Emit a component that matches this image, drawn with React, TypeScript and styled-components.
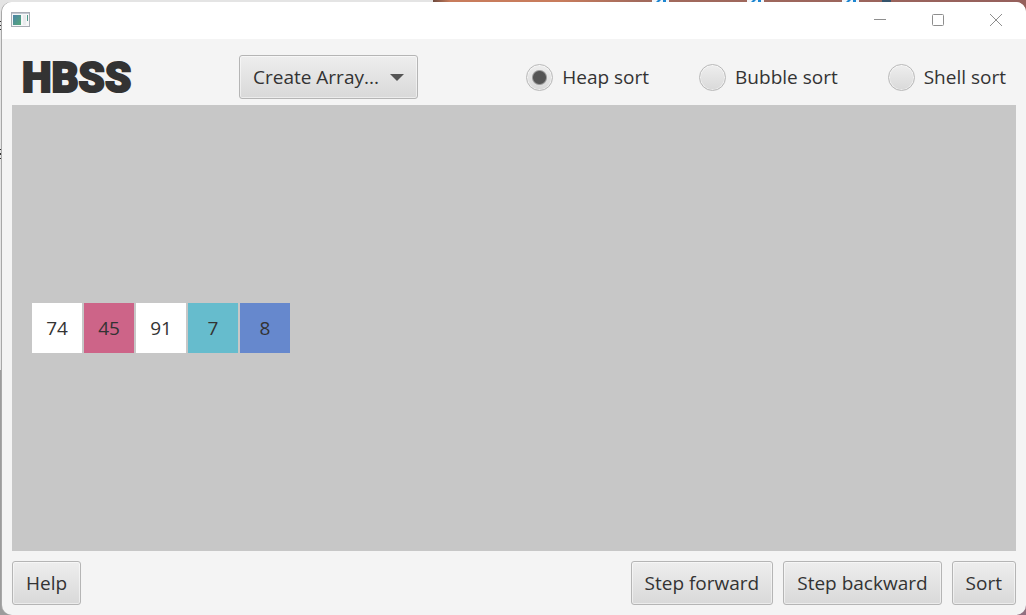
import React, { useState } from "react";
import styled, { createGlobalStyle, css } from "styled-components";

const GlobalStyle = createGlobalStyle`
  *, *::before, *::after { box-sizing: border-box; }
  html { height: 100%; }
  body {
    margin: 0;
    min-height: 100%;
    font-family: "Open Sans", "Noto Sans", sans-serif;
    font-size: 19px;
    line-height: 26px;
    color: #333333;
  }
`;

const Desktop = styled.div`
  position: relative;
  display: flex;
  min-height: 100vh;
  padding: 2px 0 0 2px;
  background:
    linear-gradient(90deg, #e4e4e4 433px, transparent 433px) 0 0 / 100% 20px no-repeat,
    linear-gradient(90deg, #6e4a3e 433px, #c87c5c 450px, #c87c5c 560px, #a26a5c 640px, #95605c 100%) 0 0 / 100% 20px no-repeat,
    linear-gradient(90deg, transparent 50%, #917080 50%) 0 100% / 100% 20px no-repeat,
    linear-gradient(#e4e4e4 370px, #9c9c9c 370px);
`;

const Backdrop = styled.svg`
  position: absolute;
  top: 0;
  left: 0;
`;

const Window = styled.div`
  position: relative;
  flex: 1;
  display: flex;
  flex-direction: column;
  border-radius: 10px;
  overflow: hidden;
  background: #f4f4f4;
  box-shadow: -1px 0 0 0 #a8a8a8;
`;

const TitleBar = styled.header`
  display: flex;
  align-items: center;
  justify-content: space-between;
  height: 37px;
  padding: 0 1px 2px 9px;
  background: #ffffff;
`;

const WindowControls = styled.div`
  display: flex;
`;

const WindowButton = styled.button`
  display: flex;
  align-items: center;
  justify-content: center;
  width: 58px;
  height: 35px;
  padding: 0;
  border: 0;
  background: transparent;
`;

const Toolbar = styled.div`
  display: flex;
  align-items: center;
  height: 66px;
  padding: 10px 20px 0;
`;

const Brand = styled.h1`
  width: 217px;
  margin: 0;
  padding-top: 2px;
  font-family: Roboto, sans-serif;
  font-size: 42px;
  font-weight: 900;
  line-height: 44px;
  -webkit-text-stroke: 2px #333333;
`;

const raised = css`
  height: 44px;
  border: 1px solid #b5b5b5;
  border-radius: 3px;
  background: linear-gradient(#eeeeee, #d9d9d9);
  box-shadow: inset 0 0 0 1px rgba(255, 255, 255, 0.5);
  color: #333333;
  font: inherit;
`;

const SelectBox = styled.div`
  position: relative;
`;

const Select = styled.select`
  ${raised}
  appearance: none;
  display: block;
  width: 179px;
  padding: 0 13px;
`;

const SelectArrow = styled.svg`
  position: absolute;
  top: 19px;
  right: 14px;
  pointer-events: none;
`;

const SortChoices = styled.div`
  display: flex;
  gap: 50px;
  margin-left: auto;
`;

const Choice = styled.label`
  display: flex;
  align-items: center;
  gap: 9px;
  white-space: nowrap;
`;

const Radio = styled.input`
  appearance: none;
  width: 27px;
  height: 27px;
  margin: 0;
  border: 1px solid #b9b9b9;
  border-radius: 50%;
  background: linear-gradient(#eeeeee, #d9d9d9);
  box-shadow: inset 0 0 0 1px rgba(255, 255, 255, 0.5);

  &:checked {
    background:
      radial-gradient(circle, #555555 6px, transparent 8px),
      linear-gradient(#eeeeee, #d9d9d9);
  }
`;

const Canvas = styled.main`
  flex: 1;
  display: flex;
  align-items: center;
  gap: 2px;
  margin: 0 10px;
  padding: 0 20px;
  background: #c7c7c7;
`;

const Cell = styled.div<{ $color: string }>`
  width: 50px;
  height: 50px;
  background: ${(p) => p.$color};
  line-height: 50px;
  text-align: center;
`;

const Footer = styled.footer`
  display: flex;
  gap: 10px;
  padding: 10px;
`;

const Button = styled.button<{ $pushRight?: boolean }>`
  ${raised}
  padding: 0 13px;
  white-space: nowrap;
  margin-right: ${(p) => (p.$pushRight ? "auto" : "0")};
`;

const cells = [
  { value: 74, color: "#ffffff" },
  { value: 45, color: "#cd6488" },
  { value: 91, color: "#ffffff" },
  { value: 7, color: "#66bccd" },
  { value: 8, color: "#6688cd" },
];

const sorts = ["Heap sort", "Bubble sort", "Shell sort"];

export default function App() {
  const [sort, setSort] = useState(sorts[0]);

  return (
    <>
      <GlobalStyle />
      <Desktop>
        <Backdrop width="900" height="200" aria-hidden="true">
          {[652, 747, 842].map((x) => (
            <g key={x}>
              <rect x={x} width="17" height="2" fill="#f3f6fa" />
              <path d={`M${x + 4} 2l2-2h3l-2 2zM${x + 11} 0h3v2h-3z`} fill="#1c86d1" />
            </g>
          ))}
          <path d="M882 0h9v2h-9z" fill="#35536b" />
          <path d="M0 21h2v1H0zM0 25h2v1H0zM0 29h2v1H0zM0 149h2v1H0zM0 153h2v2H0zM0 158h2v1H0z" fill="#333" />
        </Backdrop>
        <Window>
          <TitleBar>
            <svg width="20" height="16" viewBox="0 0 20 16" aria-hidden="true">
              <defs>
                <linearGradient id="pane" x1="0" y1="0" x2="1" y2="1">
                  <stop offset="0" stopColor="#4c83a8" />
                  <stop offset="1" stopColor="#55a878" />
                </linearGradient>
              </defs>
              <rect x="0.5" y="0.5" width="18" height="14" fill="#f6f7f8" stroke="#a9adb5" />
              <path d="M1 1h17v1H1z" fill="#c3c8d2" />
              <rect x="2" y="3" width="8" height="10" fill="url(#pane)" />
              <rect x="12" y="3" width="3" height="10" fill="#e9ebed" />
              <rect x="16" y="3" width="1" height="6" fill="#4f9a8a" />
            </svg>
            <WindowControls>
              <WindowButton aria-label="Minimize">
                <svg width="12" height="12" stroke="#8e8e8e"><path d="M0 5.5h12" /></svg>
              </WindowButton>
              <WindowButton aria-label="Maximize">
                <svg width="12" height="12" fill="none" stroke="#8e8e8e"><rect x="0.5" y="0.5" width="11" height="11" rx="1" /></svg>
              </WindowButton>
              <WindowButton aria-label="Close">
                <svg width="12" height="12" stroke="#8e8e8e"><path d="M0 0l12 12M12 0L0 12" /></svg>
              </WindowButton>
            </WindowControls>
          </TitleBar>
          <Toolbar>
            <Brand>HBSS</Brand>
            <SelectBox>
              <Select aria-label="Create array">
                <option>Create Array...</option>
              </Select>
              <SelectArrow width="14" height="7" viewBox="0 0 14 7" aria-hidden="true">
                <path d="M0 0h14L7 7z" fill="#555555" />
              </SelectArrow>
            </SelectBox>
            <SortChoices role="radiogroup" aria-label="Sort algorithm">
              {sorts.map((name) => (
                <Choice key={name}>
                  <Radio type="radio" name="sort" checked={sort === name} onChange={() => setSort(name)} />
                  {name}
                </Choice>
              ))}
            </SortChoices>
          </Toolbar>
          <Canvas>
            {cells.map((cell) => (
              <Cell key={cell.value} $color={cell.color}>{cell.value}</Cell>
            ))}
          </Canvas>
          <Footer>
            <Button $pushRight>Help</Button>
            <Button>Step forward</Button>
            <Button>Step backward</Button>
            <Button>Sort</Button>
          </Footer>
        </Window>
      </Desktop>
    </>
  );
}
